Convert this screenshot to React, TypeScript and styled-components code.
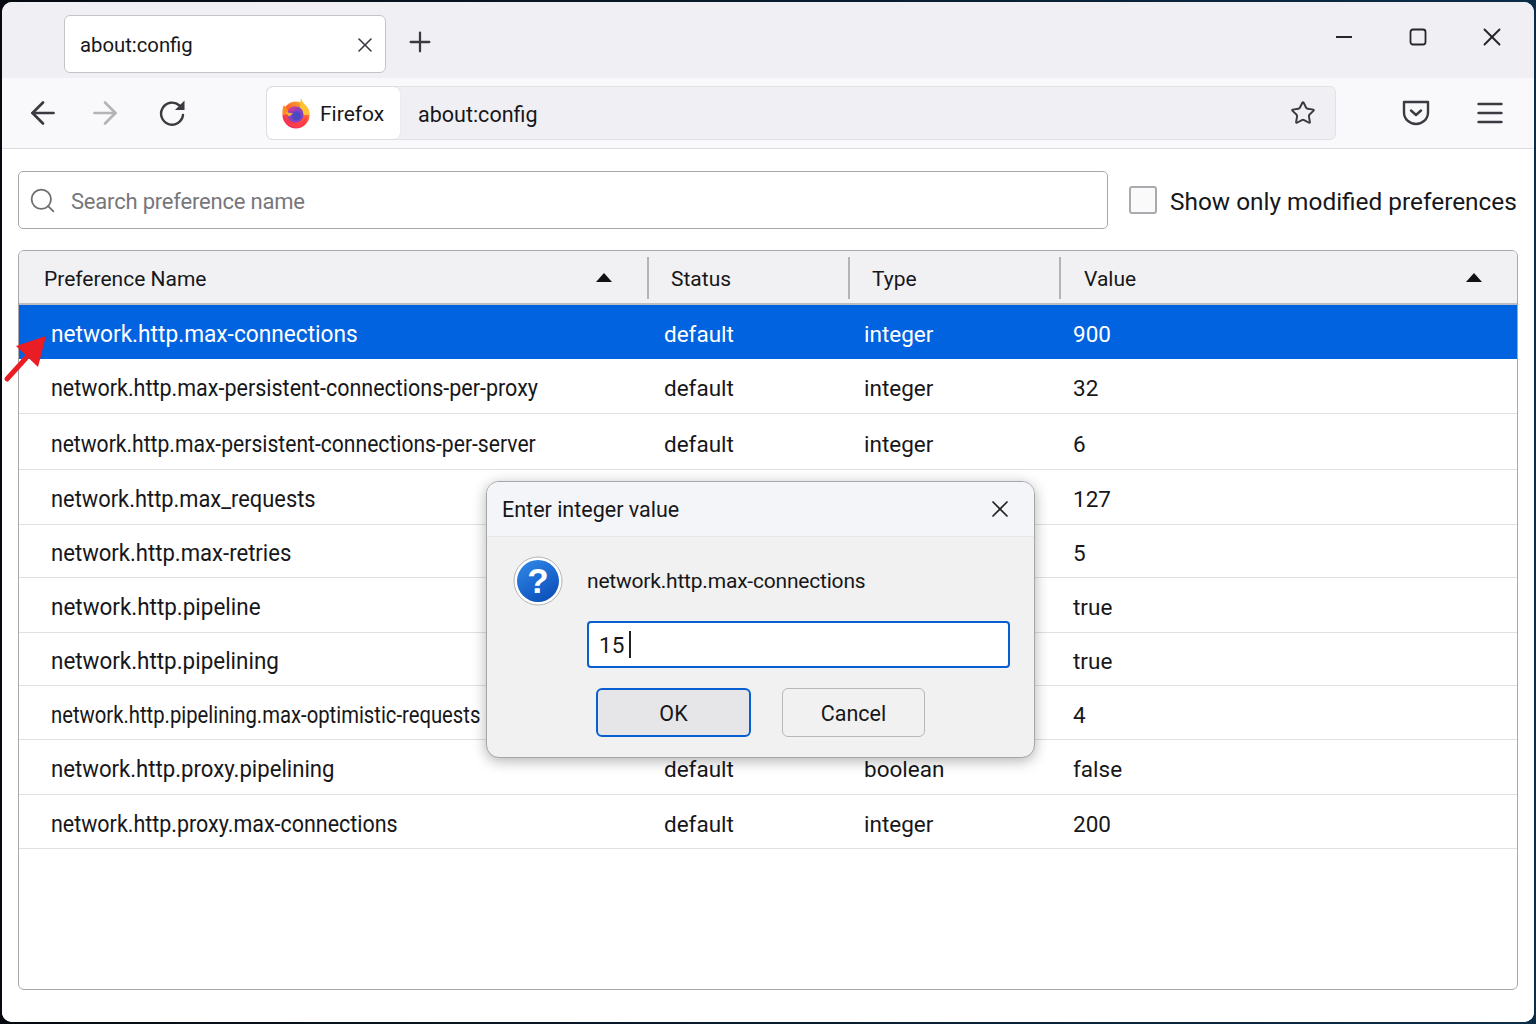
import React from 'react';
import styled, { createGlobalStyle } from 'styled-components';
import { ArrowLeft, ArrowRight, Plus, Search, Star, X } from 'lucide-react';

const GlobalStyle = createGlobalStyle`
  html, body {
    margin: 0;
    padding: 0;
    background: #0a1f30;
  }
  * {
    box-sizing: border-box;
  }
`;

// fit: how far the name is squeezed horizontally in that row
// rows behind the dialog have no visible status or type
const prefs = [
  { name: 'network.http.max-connections', status: 'default', type: 'integer', value: '900', height: 54, fit: 0.965 },
  { name: 'network.http.max-persistent-connections-per-proxy', status: 'default', type: 'integer', value: '32', height: 55, fit: 0.915 },
  { name: 'network.http.max-persistent-connections-per-server', status: 'default', type: 'integer', value: '6', height: 56, fit: 0.898 },
  { name: 'network.http.max_requests', status: '', type: '', value: '127', height: 55, fit: 0.93 },
  { name: 'network.http.max-retries', status: '', type: '', value: '5', height: 53, fit: 0.94 },
  { name: 'network.http.pipeline', status: '', type: '', value: 'true', height: 55, fit: 0.955 },
  { name: 'network.http.pipelining', status: '', type: '', value: 'true', height: 53, fit: 0.954 },
  { name: 'network.http.pipelining.max-optimistic-requests', status: '', type: '', value: '4', height: 54, fit: 0.862 },
  { name: 'network.http.proxy.pipelining', status: 'default', type: 'boolean', value: 'false', height: 55, fit: 0.943 },
  { name: 'network.http.proxy.max-connections', status: 'default', type: 'integer', value: '200', height: 54, fit: 0.913 },
];

const Page = styled.div`
  width: 1536px;
  height: 1024px;
  padding: 2px;
  overflow: hidden;
  background: linear-gradient(90deg, #060a10, #0c2c48);
  font-family: Roboto, 'Noto Sans', sans-serif;
  color: #17171a;
`;

const Window = styled.div`
  position: relative;
  display: flex;
  flex-direction: column;
  width: 100%;
  height: 100%;
  border-radius: 10px;
  overflow: hidden;
  background: #fff;
`;

const TabStrip = styled.div`
  display: flex;
  align-items: flex-start;
  height: 76px;
  padding: 13px 0 0 62px;
  background: #f0f0f4;
`;

const Tab = styled.div`
  display: flex;
  align-items: center;
  justify-content: space-between;
  width: 322px;
  height: 58px;
  padding: 2px 8px 0 15px;
  background: #fff;
  border: 1px solid #c4c4c8;
  border-radius: 6px;
  font-size: 20.3px;
`;

const NewTab = styled.div`
  display: flex;
  margin: 11px 0 0 18px;
  color: #3a3a40;
`;

const WindowControls = styled.div`
  display: flex;
  align-items: center;
  gap: 56px;
  margin: 7px 33px 0 auto;
  height: 30px;
  color: #26262a;
`;

const ControlSlot = styled.div`
  display: flex;
  align-items: center;
  justify-content: center;
  width: 18px;
  svg {
    flex-shrink: 0;
  }
`;

const NavBar = styled.div`
  display: flex;
  align-items: center;
  height: 71px;
  padding: 0 26px 1px 23px;
  background: #f9f9fb;
  border-bottom: 1px solid #dcdce0;
`;

const NavButton = styled.div<{ $gap: number }>`
  display: flex;
  margin-right: ${p => p.$gap}px;
`;

const UrlBar = styled.div`
  display: flex;
  align-items: stretch;
  width: 1070px;
  height: 54px;
  background: #f0f0f4;
  border: 1px solid #e2e2e6;
  border-radius: 6px;
  font-size: 21.5px;
`;

const Identity = styled.div`
  display: flex;
  align-items: center;
  gap: 9px;
  width: 133px;
  padding-left: 14px;
  background: #fff;
  border-radius: 6px;
  box-shadow: 0 0 1px rgba(0, 0, 0, 0.2);
`;

const IdentityLabel = styled.span`
  padding-top: 3px;
  font-size: 21px;
`;

const UrlText = styled.div`
  display: flex;
  align-items: center;
  flex: 1;
  padding: 0 19px 0 18px;
  justify-content: space-between;
`;

const UrlValue = styled.span`
  padding-top: 3px;
`;

const ToolIcons = styled.div`
  display: flex;
  align-items: center;
  gap: 47px;
  margin-left: 66px;
  color: #3a3a40;
`;

const Content = styled.div`
  display: flex;
  flex-direction: column;
  flex: 1;
  padding: 22px 16px 32px;
  background: #fff;
`;

const SearchRow = styled.div`
  display: flex;
  align-items: center;
  height: 58px;
`;

const SearchBox = styled.div`
  display: flex;
  align-items: center;
  flex-shrink: 0;
  gap: 14px;
  width: 1090px;
  height: 58px;
  padding-left: 9px;
  border: 1px solid #a8a8ac;
  border-radius: 5px;
  color: #77777b;
  font-size: 22px;
  letter-spacing: -0.2px;
`;

const SearchLabel = styled.span`
  padding-top: 2px;
`;

const Checkbox = styled.div`
  flex-shrink: 0;
  width: 28px;
  height: 28px;
  margin: 0 13px 0 21px;
  border: 2px solid #ababaf;
  border-radius: 3px;
  background: #fafafa;
`;

const CheckLabel = styled.div`
  padding-top: 2px;
  font-size: 24.4px;
  white-space: nowrap;
`;

const Table = styled.div`
  flex: 1;
  margin-top: 21px;
  border: 1px solid #a8a8ac;
  border-radius: 6px;
  overflow: hidden;
`;

const HeaderRow = styled.div`
  display: flex;
  align-items: center;
  height: 54px;
  padding-top: 2px;
  background: #f1f1f3;
  border-bottom: 2px solid #bdbdc1;
  font-size: 21px;
`;

const HeaderCell = styled.div<{ $width: number; $first?: boolean; $pad: number }>`
  display: flex;
  align-items: center;
  justify-content: space-between;
  width: ${p => p.$width}px;
  height: 42px;
  padding: 2px 35px 0 ${p => p.$pad}px;
  border-left: ${p => (p.$first ? 'none' : '2px solid #b4b4b8')};
`;

const SortArrow = styled.span`
  width: 0;
  height: 0;
  margin-top: -3px;
  border-left: 8px solid transparent;
  border-right: 8px solid transparent;
  border-bottom: 9px solid #111;
`;

const Row = styled.div<{ $selected?: boolean; $height: number }>`
  display: grid;
  grid-template-columns: 645px 200px 209px 1fr;
  align-items: center;
  height: ${p => p.$height}px;
  padding-top: 4px;
  background: ${p => (p.$selected ? '#0163e0' : '#fff')};
  color: ${p => (p.$selected ? '#fff' : '#17171a')};
  border-bottom: 1px solid ${p => (p.$selected ? '#0163e0' : '#e0e0e4')};
  font-size: 22.5px;
`;

const NameCell = styled.div`
  padding-left: 32px;
  white-space: nowrap;
`;

const Name = styled.span<{ $fit: number }>`
  display: inline-block;
  font-size: 23.5px;
  transform: scaleX(${p => p.$fit});
  transform-origin: left center;
`;

const Cell = styled.div`
  white-space: nowrap;
`;

const Dialog = styled.div`
  position: absolute;
  left: 484px;
  top: 479px;
  width: 549px;
  height: 277px;
  display: flex;
  flex-direction: column;
  background: #f1f1f1;
  border: 1px solid #a6a6a8;
  border-radius: 13px;
  overflow: hidden;
  box-shadow: 0 3px 14px rgba(0, 0, 0, 0.3);
`;

const DialogTitle = styled.div`
  display: flex;
  align-items: center;
  justify-content: space-between;
  height: 55px;
  padding: 0 20px 0 15px;
  background: #f4f5f9;
  border-bottom: 1px solid #e8e8ea;
  font-size: 21.5px;
`;

const DialogBody = styled.div`
  display: grid;
  grid-template-columns: 100px 423px;
  padding-top: 18px;
`;

const PromptIcon = styled.div`
  display: flex;
  padding-left: 26px;
`;

const Prompt = styled.div`
  display: flex;
  align-items: center;
  height: 52px;
  font-size: 21px;
  letter-spacing: -0.2px;
`;

const ValueInput = styled.div`
  grid-column: 2;
  display: flex;
  align-items: center;
  height: 47px;
  margin-top: 14px;
  padding-left: 10px;
  background: #fff;
  border: 2px solid #0a5fd0;
  border-radius: 4px;
  font-size: 22.5px;
`;

const Caret = styled.span`
  width: 2px;
  height: 27px;
  margin-left: 5px;
  background: #222;
`;

const DialogButtons = styled.div`
  grid-column: 2;
  display: flex;
  gap: 31px;
  margin-top: 20px;
  padding-left: 9px;
`;

const DialogButton = styled.div<{ $primary?: boolean }>`
  display: flex;
  align-items: center;
  justify-content: center;
  width: ${p => (p.$primary ? '155px' : '143px')};
  height: 49px;
  padding-top: 2px;
  background: ${p => (p.$primary ? '#e6e6e8' : '#f1f1f1')};
  border: ${p => (p.$primary ? '2px solid #0a5fd0' : '1px solid #b8b8ba')};
  border-radius: 6px;
  font-size: 21.5px;
`;

const Pointer = styled.svg`
  position: absolute;
  left: 0;
  top: 330px;
  overflow: visible;
`;

const FirefoxLogo = () => (
  <svg width="30" height="32" viewBox="0 0 30 32">
    <defs>
      <linearGradient id="ffBody" x1="0.8" y1="0" x2="0.2" y2="1">
        <stop offset="0" stopColor="#ffb52b" />
        <stop offset="0.45" stopColor="#ff5a34" />
        <stop offset="1" stopColor="#e8245f" />
      </linearGradient>
    </defs>
    <circle cx="15" cy="18" r="13.5" fill="url(#ffBody)" />
    <path d="M20 1c1 4 3.500 6 6 9 2 2.500 2.500 6 2.500 8L21 18c-2-4-3-6-1-17z" fill="#ffc233" />
    <path d="M3 8c1 2 2 3 3 3l2 6-6 1c-1-4-.5-7 1-10z" fill="#ff8a1f" />
    <circle cx="14.500" cy="17.500" r="8" fill="#8a3fc4" />
    <circle cx="15.500" cy="19" r="4.500" fill="#4a49c0" />
    <path d="M7 14c3-3 8-5 11-3-2 1-4 1-5 3-2 0-4 1-6 0z" fill="#c23aa0" />
    <path d="M4 15l8 1.500-4 3z" fill="#ffb02e" />
    <path d="M3 21c3 7 14 9 20 2 1.500-1.500 2.500-3 2.500-5 2 6-3 12-10 12S4 26 3 21z" fill="#ff3b4f" />
  </svg>
);

const ReloadIcon = () => (
  <svg width="28" height="28" viewBox="0 0 28 28" fill="none">
    <path d="M24 16a11 11 0 1 1-3.500-9.500L24 9" stroke="#3a3a40" strokeWidth="2.400" strokeLinecap="round" />
    <path d="M25.500 1.500V11H16z" fill="#3a3a40" />
  </svg>
);

const PocketIcon = () => (
  <svg width="28" height="26" viewBox="0 0 28 26" fill="none" stroke="#3a3a40" strokeWidth="2.400">
    <path d="M2 2h24v10.500c0 6.500-5.500 11.500-12 11.500S2 19 2 12.500z" strokeLinejoin="round" />
    <path d="M9 10.500l5 4.500 5-4.500" strokeLinecap="round" strokeLinejoin="round" />
  </svg>
);

const MenuIcon = () => (
  <svg width="26" height="22" viewBox="0 0 26 22" stroke="#3a3a40" strokeWidth="2.400" strokeLinecap="round">
    <path d="M1.500 2h23M1.500 11h23M1.500 20h23" />
  </svg>
);

const MinimizeIcon = () => (
  <svg width="18" height="4" viewBox="0 0 18 4" stroke="#26262a" strokeWidth="2">
    <path d="M1 2h16" />
  </svg>
);

const MaximizeIcon = () => (
  <svg width="18" height="18" viewBox="0 0 18 18" fill="none" stroke="#26262a" strokeWidth="1.800">
    <rect x="1.500" y="1.500" width="15" height="15" rx="2.500" />
  </svg>
);

const QuestionIcon = () => (
  <svg width="50" height="52" viewBox="0 0 50 52">
    <defs>
      <linearGradient id="qBlue" x1="0.2" y1="0" x2="0.8" y2="1">
        <stop offset="0" stopColor="#2f86e6" />
        <stop offset="1" stopColor="#0a4db8" />
      </linearGradient>
    </defs>
    <circle cx="25" cy="26" r="24" fill="#fff" stroke="#b4b4b8" strokeWidth="1" />
    <circle cx="25" cy="26" r="21" fill="url(#qBlue)" />
    <text x="25" y="38" textAnchor="middle" fontFamily="'Liberation Sans', sans-serif" fontWeight="700" fontSize="35" fill="#fff">
      ?
    </text>
  </svg>
);

const App = () => (
  <Page>
    <GlobalStyle />
    <Window>
      <TabStrip>
        <Tab>
          about:config
          <X size={24} strokeWidth={1.6} color="#3a3a40" />
        </Tab>
        <NewTab>
          <Plus size={32} strokeWidth={1.7} />
        </NewTab>
        <WindowControls>
          <ControlSlot>
            <MinimizeIcon />
          </ControlSlot>
          <ControlSlot>
            <MaximizeIcon />
          </ControlSlot>
          <ControlSlot>
            <X size={30} strokeWidth={1.5} />
          </ControlSlot>
        </WindowControls>
      </TabStrip>
      <NavBar>
        <NavButton $gap={26}>
          <ArrowLeft size={36} strokeWidth={1.8} color="#3a3a40" />
        </NavButton>
        <NavButton $gap={36}>
          <ArrowRight size={36} strokeWidth={1.8} color="#b4b4b8" />
        </NavButton>
        <NavButton $gap={79}>
          <ReloadIcon />
        </NavButton>
        <UrlBar>
          <Identity>
            <FirefoxLogo />
            <IdentityLabel>Firefox</IdentityLabel>
          </Identity>
          <UrlText>
            <UrlValue>about:config</UrlValue>
            <Star size={26} strokeWidth={1.8} color="#3a3a40" />
          </UrlText>
        </UrlBar>
        <ToolIcons>
          <PocketIcon />
          <MenuIcon />
        </ToolIcons>
      </NavBar>
      <Content>
        <SearchRow>
          <SearchBox>
            <Search size={29} strokeWidth={1.5} color="#6f6f73" />
            <SearchLabel>Search preference name</SearchLabel>
          </SearchBox>
          <Checkbox />
          <CheckLabel>Show only modified preferences</CheckLabel>
        </SearchRow>
        <Table>
          <HeaderRow>
            <HeaderCell $first $width={628} $pad={25}>
              Preference Name
              <SortArrow />
            </HeaderCell>
            <HeaderCell $width={201} $pad={22}>
              Status
            </HeaderCell>
            <HeaderCell $width={211} $pad={22}>
              Type
            </HeaderCell>
            <HeaderCell $width={458} $pad={23}>
              Value
              <SortArrow />
            </HeaderCell>
          </HeaderRow>
          {prefs.map((pref, i) => (
            <Row key={pref.name} $selected={i === 0} $height={pref.height}>
              <NameCell>
                <Name $fit={pref.fit}>{pref.name}</Name>
              </NameCell>
              <Cell>{pref.status}</Cell>
              <Cell>{pref.type}</Cell>
              <Cell>{pref.value}</Cell>
            </Row>
          ))}
        </Table>
      </Content>
      <Pointer width="46" height="52" viewBox="0 0 46 52">
        <path d="M5 47L24 26" stroke="#ea1c24" strokeWidth="5" strokeLinecap="round" />
        <path d="M44 4L14 14L36 35z" fill="#ea1c24" />
      </Pointer>
      <Dialog>
        <DialogTitle>
          Enter integer value
          <X size={28} strokeWidth={1.5} color="#222" />
        </DialogTitle>
        <DialogBody>
          <PromptIcon>
            <QuestionIcon />
          </PromptIcon>
          <Prompt>network.http.max-connections</Prompt>
          <ValueInput>
            15
            <Caret />
          </ValueInput>
          <DialogButtons>
            <DialogButton $primary>OK</DialogButton>
            <DialogButton>Cancel</DialogButton>
          </DialogButtons>
        </DialogBody>
      </Dialog>
    </Window>
  </Page>
);

export default App;
